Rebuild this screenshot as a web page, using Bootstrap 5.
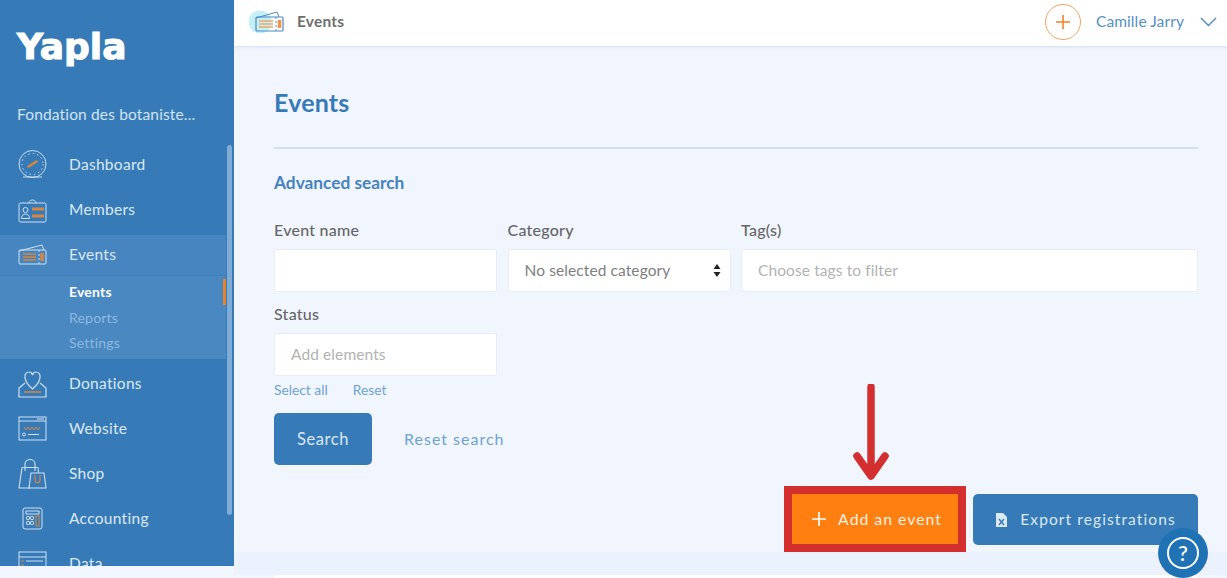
<!DOCTYPE html>
<html lang="en"><head><meta charset="utf-8"><title>Events</title>
<link href="https://cdn.jsdelivr.net/npm/bootstrap@5.3.0/dist/css/bootstrap.min.css" rel="stylesheet">
<style>
html,body{height:578px;overflow:hidden}
body{background:#f0f5fe;font-family:Lato,"Open Sans",sans-serif;color:#6b6b6b;font-size:15.5px}
.shell{height:578px;position:relative}
.rightcol{min-width:0}
.side{width:234px;height:566px;background:#367bb8;flex:none;position:relative;overflow:hidden;color:#dce9f5}
.brand{font-family:"DejaVu Sans",sans-serif;font-weight:700;font-size:36px;line-height:40px;color:#fff;-webkit-text-stroke:1.1px #fff;padding:27px 0 0 17px;height:66px}
.orgname{padding:36px 0 0 17px;height:76px;line-height:24px;font-size:15.5px;letter-spacing:.15px;color:#d3e3f2;white-space:nowrap}
.navrow{height:45px;display:flex;align-items:center;padding-left:17px;gap:21px;font-size:15.5px;letter-spacing:.3px;width:226px;color:#dce9f5}
.navrow svg{width:31px;height:30px;flex:none}
.actrow{height:41px;margin-top:3px;background:#4685bf;border-bottom:1px solid #3f7fb9}
.subm{background:#4a88c1;width:226px;height:83px;padding:3px 0 0 69px;position:relative;font-size:14px;line-height:25.5px;margin-bottom:2px}
.subm div{color:#90b8dc;letter-spacing:.2px}
.subm .on{color:#fff;font-weight:700}
.marker{position:absolute;right:0;top:3px;width:3px;height:26px;background:#e8812e}
.sbar{position:absolute;left:227px;top:145px;width:5px;height:370px;border-radius:3px;background:#7fabd4}
.topb{height:46px;background:#fff;box-shadow:0 1px 3px rgba(80,110,160,.18);padding:0 10px 2px 15px;flex:none}
.topb svg.tk{width:36px;height:24px}
.crumb{font-weight:700;font-size:15.5px;color:#6e6e6e;margin-left:12px;letter-spacing:.2px}
.plusc{width:36px;height:36px;border:1px solid #f5a25c;border-radius:50%;color:#f58220;margin-right:15px}
.uname{color:#5590c6;font-size:15.5px;letter-spacing:.1px;margin-right:16px}
.mainw{padding:0 29px 0 40px;flex:1 1 auto;min-width:0;position:relative}
h1.ttl{font-size:25px;font-weight:700;color:#367bb8;margin:0;padding-top:43px;line-height:26px;height:101px;letter-spacing:.2px}
.rule{height:2px;background:#d5dfee}
.adv{font-weight:700;font-size:17.3px;color:#4582bd;line-height:20px;margin-top:24px;height:20px}
.fgrid{display:grid;grid-template-columns:223px 223px 1fr;column-gap:10.5px;margin-top:26px}
.lbl{font-size:16px;line-height:20px;height:30px;color:#666;letter-spacing:.25px;font-weight:500;padding-top:1px;margin:0;display:block}
.box{height:43px;background:#fff;border:1px solid #e8eef7;border-radius:2px;padding:0 16px;display:flex;align-items:center;font-size:15.5px;color:#b2b2b2;letter-spacing:.1px}
.box.sel{color:#808080;justify-content:space-between;padding-right:9px}
.stat{margin-top:11px;width:223px}
.lnks{font-size:13.8px;line-height:18px;color:#6ea3d3;margin-top:5px;gap:25px;height:18px}
.btnrow{margin-top:14px;gap:32px}
.btn.srch{background:#367bb8;border:0;color:#dbe9f5;width:98px;height:52px;border-radius:5px;font-size:16.5px;letter-spacing:.6px;padding:0}
.rs{color:#6ea3d3;font-size:16px;letter-spacing:1px}
.actions{margin-top:21px;justify-content:flex-end;gap:7px;position:relative;height:66px}
.redb{border:8px solid #d42f2f;height:66px;width:182px;background:#ff7f11;display:flex;align-items:center;justify-content:center;gap:12px;color:#fff1e2;font-size:15.8px;letter-spacing:1px;padding-left:4px}
.btn.exp{background:#367bb8;border:0;color:#dbe9f5;width:225px;height:51px;margin-top:8px;border-radius:5px;font-size:15.5px;letter-spacing:1.1px;padding:0;display:flex;align-items:center;justify-content:center;gap:12px}
.band{height:23px;background:#ecf2fd;margin:0 -29px 0 -40px}
.cardtop{height:3px;background:#fff;border-radius:3px 3px 0 0}
.arrow{position:absolute;left:852px;top:384px;width:38px;height:98px}
.helpb{position:absolute;left:1158px;top:528px;width:50px;height:50px;border-radius:50%;background:#1f73b5;display:flex;align-items:center;justify-content:center}
.helpi{width:32px;height:32px;border:2px solid #fff;border-radius:50%;color:#fff;font-size:22px;line-height:28px;text-align:center;font-weight:500}
</style></head>
<body>
<div class="shell d-flex">
<aside class="side">
<div class="brand">Yapla</div>
<div class="orgname">Fondation des botaniste...</div>
<div class="navrow"><svg viewBox="0 0 31 30" fill="none" stroke="#cfe0f0" stroke-width="1"><circle cx="15.5" cy="14" r="13.5"/><circle cx="15.5" cy="14" r="10.5" stroke-dasharray="1.5 3"/><path d="M6 27h19"/><path d="M11.500 16.500l8-5" stroke="#d9853c" stroke-width="2.600" stroke-linecap="round"/></svg>Dashboard</div>
<div class="navrow"><svg viewBox="0 0 31 30" fill="none" stroke="#cfe0f0" stroke-width="1"><rect x="2" y="8" width="27" height="19" rx="1.5"/><path d="M12 8c0-4 7-4 7 0"/><circle cx="8.500" cy="15" r="2.500"/><path d="M4.500 23.500c0-6 8-6 8 0z"/><path d="M15 14h12M15 21h12" stroke="#d9853c" stroke-width="3"/></svg>Members</div>
<div class="navrow actrow"><svg viewBox="0 0 31 30" fill="none" stroke="#cfe0f0" stroke-width="1"><path d="M2 11l23-6 2 5"/><rect x="2" y="10" width="27" height="14" rx="1"/><path d="M6 14h13M6 17h13M6 20h13" stroke="#d9853c" stroke-width="1.500"/><path d="M22 10v14" stroke-dasharray="2 2"/><path d="M25 13v8" stroke="#d9853c" stroke-width="3.500"/></svg>Events</div>
<div class="subm"><span class="marker"></span><div class="on">Events</div><div>Reports</div><div>Settings</div></div>
<div class="navrow"><svg viewBox="0 0 31 30" fill="none" stroke="#cfe0f0" stroke-width="1.200"><path d="M15.500 20C5 11 7 3 12 3c2 0 3 1 3.500 3 .5-2 1.500-3 3.500-3 5 0 7 8-3.500 17z"/><path d="M8 14l-6 5v9h27v-9l-6-5"/><path d="M7 23h17" stroke="#d9853c" stroke-width="1.500"/></svg>Donations</div>
<div class="navrow"><svg viewBox="0 0 31 30" fill="none" stroke="#cfe0f0" stroke-width="1"><rect x="2" y="3" width="27" height="23"/><path d="M2 7h27M20 5h7"/><path d="M7 13l2 3 2-3 2 3 2-3 2 3 2-3 2 3 2-3" stroke="#d9853c"/><circle cx="7" cy="20.500" r="1.500"/><path d="M11 20.500h11"/></svg>Website</div>
<div class="navrow"><svg viewBox="0 0 31 30" fill="none" stroke="#cfe0f0" stroke-width="1.100"><path d="M5 8.500h16M5 8.500L2 29h11M21 8.500l.5 5"/><path d="M8 12V5c0-6 10-6 10 0v7"/><path d="M14 14h13l2 15H12z"/><path d="M18 16v5c0 3.500 5 3.500 5 0v-5" stroke="#d9853c"/></svg>Shop</div>
<div class="navrow"><svg viewBox="0 0 31 30" fill="none" stroke="#cfe0f0" stroke-width="1"><rect x="6" y="4" width="19" height="21" rx="2"/><rect x="9" y="7" width="13" height="3"/><circle cx="11" cy="14" r="1.700"/><circle cx="15" cy="14" r="1.700"/><circle cx="11" cy="19" r="1.700"/><circle cx="15" cy="19" r="1.700"/><rect x="19" y="12" width="3" height="10" stroke="#d9853c"/></svg>Accounting</div>
<div class="navrow"><svg viewBox="0 0 31 30" fill="none" stroke="#cfe0f0" stroke-width="1"><rect x="2" y="3" width="27" height="23"/><path d="M2 8h27M9 12h17M9 18h17"/><path d="M4 12h3M4 16h3" stroke="#d9853c"/></svg>Data</div>
<div class="sbar"></div>
</aside>
<div class="rightcol d-flex flex-column flex-grow-1">
<header class="topb d-flex align-items-center">
<svg class="tk" viewBox="0 0 36 24" fill="none"><circle cx="11" cy="12" r="11.500" fill="#c5f0f8"/><path d="M7 8l21-6 2 5" stroke="#4a8ac2"/><rect x="7" y="7" width="27" height="14" rx="1" stroke="#4a8ac2" stroke-width="1.200"/><path d="M10 11h14M10 14h14M10 17h14" stroke="#e9a96a" stroke-width="1.300"/><path d="M27 7v14" stroke="#4a8ac2" stroke-dasharray="2 2"/><path d="M30.500 10v8" stroke="#f0934a" stroke-width="3.500"/></svg>
<span class="crumb">Events</span>
<div class="ms-auto d-flex align-items-center">
<div class="plusc d-flex align-items-center justify-content-center"><svg width="16" height="16" viewBox="0 0 16 16"><path d="M8 1v14M1 8h14" stroke="#f58220" stroke-width="1.600"/></svg></div>
<span class="uname">Camille Jarry</span>
<svg width="17" height="10" viewBox="0 0 17 10" fill="none"><path d="M1 1l7.500 7.500L16 1" stroke="#4f8cc4" stroke-width="1.400"/></svg>
</div>
</header>
<main class="mainw">
<h1 class="ttl">Events</h1>
<div class="rule"></div>
<div class="adv">Advanced search</div>
<div class="fgrid">
<div><label class="lbl">Event name</label><div class="box"></div></div>
<div><label class="lbl">Category</label><div class="box sel">No selected category<svg width="8" height="13" viewBox="0 0 8 13"><path d="M4 0l3.500 5H.5zM4 13l3.500-5H.5z" fill="#222"/></svg></div></div>
<div><label class="lbl">Tag(s)</label><div class="box">Choose tags to filter</div></div>
</div>
<div class="stat"><label class="lbl">Status</label><div class="box">Add elements</div></div>
<div class="lnks d-flex"><span>Select all</span><span>Reset</span></div>
<div class="btnrow d-flex align-items-center"><button class="btn srch">Search</button><span class="rs">Reset search</span></div>
<div class="actions d-flex">
<div class="redb"><svg width="14" height="14" viewBox="0 0 14 14"><path d="M7 0v14M0 7h14" stroke="#fff" stroke-width="1.600"/></svg>Add an event</div>
<button class="btn exp"><svg width="13" height="16" viewBox="0 0 13 16" fill="none"><path d="M1 1h7l4 4v10H1z" fill="#dbe9f5"/><path d="M4 7l5 6M9 7l-5 6" stroke="#367bb8" stroke-width="1.400"/></svg>Export registrations</button>
</div>
<div class="band"></div>
<div class="cardtop"></div>
</main>
</div>
<svg class="arrow" viewBox="0 0 38 98" fill="none"><path d="M19 3v88M5 72l14 20 14-20" stroke="#d42f2f" stroke-width="7.500" stroke-linecap="round" stroke-linejoin="round"/></svg>
<div class="helpb"><div class="helpi">?</div></div>
</div>
</body></html>
